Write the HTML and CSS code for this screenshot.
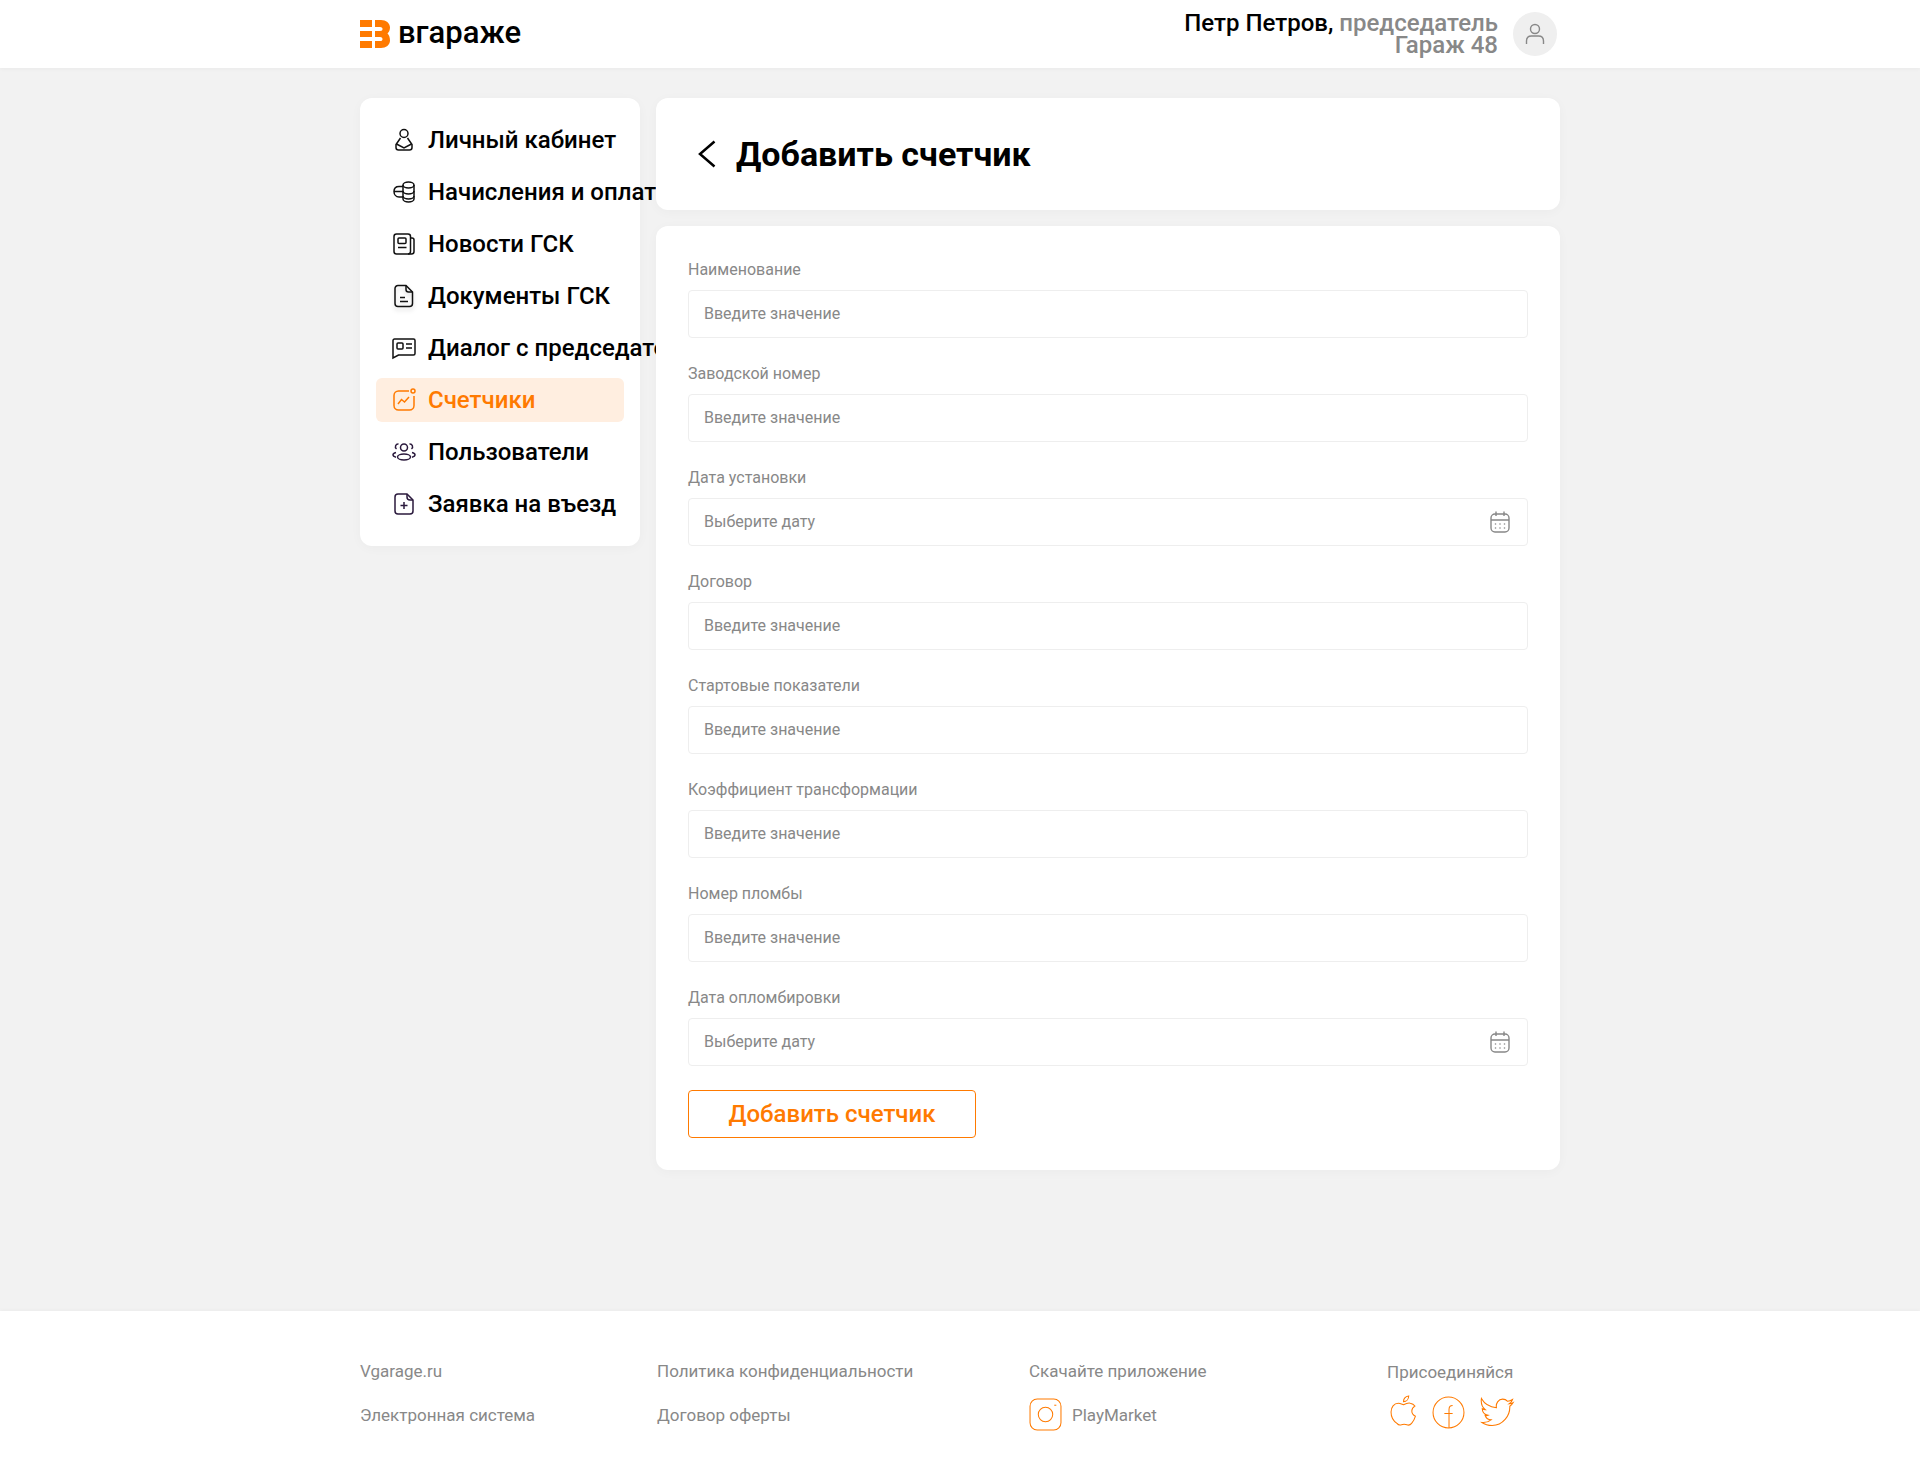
FILE: index.html
```html
<!DOCTYPE html>
<html lang="ru">

<head>
    <meta charset="UTF-8">
    <meta name="viewport" content="width=device-width, initial-scale=1.0">
    <title>Добавить счетчик</title>
    <link rel="stylesheet" href="styles.css">
</head>

<body>

    <header class="topbar">
        <div class="topbar-inner">
            <a class="logo" href="#">
                <svg class="logo-mark" viewBox="0 0 30 28" width="30" height="28">
                    <path fill="#ff7a00" d="M0 0h12v7H0zM0 11h12v6H0zM0 21h12v7H0zM15 0h6c5 0 9 3 9 7.500 0 2.500-1 4.500-2.500 6 1.500 1.500 2.500 3.500 2.500 7 0 4.500-4 7.500-9 7.500h-6v-7h5c2 0 2.500-1 2.500-1.800S22 17 20 17h-5v-6h5c2 0 2.500-1 2.500-2S22 7 20 7h-5z" />
                </svg>
                <span class="logo-text">вгараже</span>
            </a>
            <div class="user">
                <div class="user-text">
                    <div><b>Петр Петров,</b> председатель</div>
                    <div>Гараж 48</div>
                </div>
                <div class="avatar">
                    <svg viewBox="0 0 24 24" width="24" height="24" fill="none" stroke="#888" stroke-width="1.400">
                        <circle cx="12" cy="7" r="4.500" />
                        <path d="M3.500 22v-3c0-3 2-5 5-5h7c3 0 5 2 5 5v3" />
                    </svg>
                </div>
            </div>
        </div>
    </header>

    <div class="page">
        <aside class="sidebar">
            <a class="nav-item" href="#">
                <svg class="nav-icon" viewBox="0 0 24 24">
                    <circle cx="12" cy="5.500" r="4" />
                    <path d="M8.500 10 4 16.500v3A2.500 2.500 0 0 0 6.500 22h11a2.500 2.500 0 0 0 2.500-2.500v-3L15.500 10" />
                    <path d="m4.500 16 7.500 4 7.500-4" />
                </svg>
                <span>Личный кабинет</span>
            </a>
            <a class="nav-item" href="#">
                <svg class="nav-icon" viewBox="0 0 24 24">
                    <path d="M11 5c0-1.700 2.500-3 5.500-3S22 3.300 22 5v14c0 1.700-2.500 3-5.500 3S11 20.700 11 19z" />
                    <path d="M11 5c0 1.700 2.500 3 5.500 3S22 6.700 22 5M11 11c0 1.700 2.500 3 5.500 3s5.500-1.300 5.500-3M11 16c0 1.700 2.500 3 5.500 3s5.500-1.300 5.500-3" />
                    <path d="M11 6.500H7c-3 0-5 2-5 5s2 5.500 5 5.500h4M2.500 11.500H11" />
                </svg>
                <span>Начисления и оплата</span>
            </a>
            <a class="nav-item" href="#">
                <svg class="nav-icon" viewBox="0 0 24 24">
                    <rect x="2" y="2" width="16.500" height="20" rx="2.500" />
                    <rect x="6" y="6" width="8" height="5.500" rx="1" />
                    <path d="M6 15.500h8.500M18.500 6h1.500a2 2 0 0 1 2 2v11.500a2.500 2.500 0 0 1-2.500 2.500H16" />
                </svg>
                <span>Новости ГСК</span>
            </a>
            <a class="nav-item" href="#">
                <svg class="nav-icon soft" viewBox="0 0 24 24">
                    <path d="M6 1.500h8l6.500 6.500v11.500a3 3 0 0 1-3 3h-11.500a3 3 0 0 1-3-3v-15a3 3 0 0 1 3-3z" />
                    <path d="M14 1.500v4a2.500 2.500 0 0 0 2.500 2.500h4M8 13.500h5M8 17.500h8" />
                </svg>
                <span>Документы ГСК</span>
            </a>
            <a class="nav-item" href="#">
                <svg class="nav-icon" viewBox="0 0 24 24">
                    <path d="M2.500 3h19A1.500 1.500 0 0 1 23 4.500v13a1.500 1.500 0 0 1-1.500 1.500H6.500L1 22V4.500A1.500 1.500 0 0 1 2.500 3z" />
                    <rect x="5" y="7" width="6" height="6" rx="1" />
                    <path d="M14 8h6M14 12h6" />
                </svg>
                <span>Диалог с председателем</span>
            </a>
            <a class="nav-item active" href="#">
                <svg class="nav-icon" viewBox="0 0 24 24">
                    <path d="M17 3H6.500A4.500 4.500 0 0 0 2 7.500v10A4.500 4.500 0 0 0 6.500 22h11a4.500 4.500 0 0 0 4.500-4.500V8" />
                    <circle cx="21" cy="3" r="2" />
                    <path d="m6 16 3.500-4.500 3 2.500L17 9" />
                </svg>
                <span>Счетчики</span>
            </a>
            <a class="nav-item" href="#">
                <svg class="nav-icon dark" viewBox="0 0 24 24">
                    <circle cx="12" cy="7.500" r="3.500" />
                    <path d="M6.500 4a2.800 2.800 0 0 0-2 5M17.500 4a2.800 2.800 0 0 1 2 5" />
                    <ellipse cx="12" cy="17" rx="6.500" ry="3" />
                    <path d="M4 12.500c-2 .5-3 1.300-3 2.300s1 1.900 3 2.400M20 12.500c2 .5 3 1.300 3 2.300s-1 1.900-3 2.400" />
                </svg>
                <span>Пользователи</span>
            </a>
            <a class="nav-item" href="#">
                <svg class="nav-icon dark" viewBox="0 0 24 24">
                    <path d="M6 2h9l6 6v11a3 3 0 0 1-3 3H6a3 3 0 0 1-3-3V5a3 3 0 0 1 3-3z" />
                    <path d="M15 2v3a3 3 0 0 0 3 3h3M12 10v7M8.500 13.500h7" />
                </svg>
                <span>Заявка на въезд</span>
            </a>
        </aside>

        <main class="content">
            <div class="card title-card">
                <a class="back" href="#">
                    <svg viewBox="0 0 18 28" width="18" height="28" fill="none" stroke="#000" stroke-width="2.500">
                        <path d="M16.500 1.500 2 14l14.500 12.500" />
                    </svg>
                </a>
                <h1>Добавить счетчик</h1>
            </div>

            <form class="card form-card">
                <div class="field">
                    <label>Наименование</label>
                    <input type="text" placeholder="Введите значение">
                </div>
                <div class="field">
                    <label>Заводской номер</label>
                    <input type="text" placeholder="Введите значение">
                </div>
                <div class="field">
                    <label>Дата установки</label>
                    <div class="date-input">
                        <input type="text" placeholder="Выберите дату">
                        <svg class="cal" viewBox="0 0 20 22">
                            <use href="#calendar" />
                        </svg>
                    </div>
                </div>
                <div class="field">
                    <label>Договор</label>
                    <input type="text" placeholder="Введите значение">
                </div>
                <div class="field">
                    <label>Стартовые показатели</label>
                    <input type="text" placeholder="Введите значение">
                </div>
                <div class="field">
                    <label>Коэффициент трансформации</label>
                    <input type="text" placeholder="Введите значение">
                </div>
                <div class="field">
                    <label>Номер пломбы</label>
                    <input type="text" placeholder="Введите значение">
                </div>
                <div class="field">
                    <label>Дата опломбировки</label>
                    <div class="date-input">
                        <input type="text" placeholder="Выберите дату">
                        <svg class="cal" viewBox="0 0 20 22">
                            <use href="#calendar" />
                        </svg>
                    </div>
                </div>
                <button class="add-btn" type="button">Добавить счетчик</button>
            </form>
        </main>
    </div>

    <footer class="footer">
        <div class="footer-inner">
            <div class="footer-col">
                <a href="#">Vgarage.ru</a>
                <a href="#">Электронная система</a>
            </div>
            <div class="footer-col">
                <a href="#">Политика конфиденциальности</a>
                <a href="#">Договор оферты</a>
            </div>
            <div class="footer-col">
                <a href="#">Скачайте приложение</a>
                <a class="store" href="#">
                    <svg class="orange-icon" viewBox="0 0 32 32" width="33" height="33">
                        <rect x="1" y="1" width="30" height="30" rx="7" />
                        <circle cx="16" cy="16" r="7" />
                        <path d="M24.500 7h2" />
                    </svg>
                    <span>PlayMarket</span>
                </a>
            </div>
            <div class="footer-col join">
                <a href="#">Присоединяйся</a>
                <div class="socials">
                    <svg class="orange-icon" viewBox="0 0 26 32" width="27" height="34">
                        <path d="M13 9c2-1 4-2 6.500-1.500 2 .3 3.500 1.300 4.500 2.800-2 1.200-3 2.700-3 4.700 0 2.300 1.300 4 3.500 5-.7 2.500-2 5-3.700 7-1.300 1.500-2.800 2-4.500 1.300-2-.8-3.500-.8-5.300 0-1.700.7-3.100.2-4.300-1.300C3.500 24.800 1 20.500 1 16c0-4.500 2.800-8.500 7-8.500 2 0 3.500 1 5 1.500z" />
                        <path d="M13 6c0-3 2-5 5-5.500 0 3-2 5.500-5 5.500z" />
                    </svg>
                    <svg class="orange-icon" viewBox="0 0 32 32" width="33" height="33">
                        <circle cx="16" cy="16" r="15" />
                        <path d="M16.500 31V13c0-2.500 1-3.800 3.500-3.800M12 17h8" />
                    </svg>
                    <svg class="orange-icon" viewBox="0 0 32 28" width="35" height="30">
                        <path d="M1 1.500c2.500 4.500 7.500 8 14 8.500-.8-4 1.800-8 5.800-8 2 0 3.500.8 4.700 2 1.500-.2 3-.8 4.500-1.700-.5 1.500-1.500 3-3 4 1.300-.1 2.500-.5 3.500-1-.8 1.300-2 2.500-3 3.300.3 9-6.500 18-16.500 18-3.500 0-7-1-9.500-2.800 3 .3 6-.5 8.500-2.500-2.500 0-4.700-1.700-5.500-4 1 .2 2 .1 2.700-.2C4 16.500 1.800 14 1.800 11c.8.500 1.800.8 2.800.8C1.500 9.500.5 5 1 1.500z" />
                    </svg>
                </div>
            </div>
        </div>
    </footer>

    <svg class="defs" width="0" height="0">
        <symbol id="calendar" viewBox="0 0 20 22">
            <rect x="1" y="3" width="18" height="18" rx="4" fill="none" stroke="#888" stroke-width="1.400" />
            <path d="M1 9h18M6 .5v4.500M14 .5v4.500" fill="none" stroke="#888" stroke-width="1.400" />
            <g fill="#888">
                <circle cx="5.500" cy="13" r=".8" />
                <circle cx="10" cy="13" r=".8" />
                <circle cx="14.500" cy="13" r=".8" />
                <circle cx="5.500" cy="17" r=".8" />
                <circle cx="10" cy="17" r=".8" />
                <circle cx="14.500" cy="17" r=".8" />
            </g>
        </symbol>
    </svg>

</body>

</html>
```

FILE: styles.css
```css
* {
    box-sizing: border-box;
}

body {
    margin: 0;
    font-family: 'Roboto', sans-serif;
    color: #000;
    background-color: #f2f2f2;
}

a {
    color: inherit;
    text-decoration: none;
}

.defs {
    position: absolute;
}

/* Header */
.topbar {
    height: 68px;
    background-color: #fff;
    box-shadow: 0 1px 4px rgba(0, 0, 0, 0.04);
}

.topbar-inner {
    width: 1200px;
    height: 68px;
    margin: 0 auto;
    display: flex;
    align-items: center;
    justify-content: space-between;
}

.logo {
    display: flex;
    align-items: center;
    gap: 8px;
    font-size: 31px;
    font-weight: 500;
}

.logo-mark {
    display: block;
}

.logo-text {
    padding-bottom: 3px;
}

.user {
    display: flex;
    align-items: center;
    gap: 15px;
    padding-right: 3px;
}

.user-text {
    font-size: 24px;
    font-weight: 500;
    line-height: 22px;
    text-align: right;
    color: #888;
}

.user-text b {
    font-weight: 500;
    color: #000;
}

.avatar {
    width: 44px;
    height: 44px;
    border-radius: 50%;
    background-color: #efefef;
    display: flex;
    align-items: center;
    justify-content: center;
}

/* Page layout */
.page {
    width: 1200px;
    margin: 30px auto 141px;
    display: flex;
    align-items: flex-start;
    gap: 16px;
}

.sidebar {
    flex: 0 0 280px;
    width: 280px;
    padding: 20px 16px;
    display: flex;
    flex-direction: column;
    gap: 8px;
    background-color: #fff;
    border-radius: 12px;
    box-shadow: 0 2px 12px rgba(0, 0, 0, 0.03);
}

.nav-item {
    height: 44px;
    padding: 0 16px;
    display: flex;
    align-items: center;
    gap: 12px;
    font-size: 24px;
    font-weight: 500;
    white-space: nowrap;
    border-radius: 6px;
}

.nav-icon {
    flex: none;
    width: 24px;
    height: 24px;
    fill: none;
    stroke: #111;
    stroke-width: 1.500;
}

.nav-icon.dark {
    stroke: #2b1a3d;
}

.nav-icon.soft {
    filter: drop-shadow(0 3px 2px rgba(0, 0, 0, 0.15));
}

.nav-item.active {
    color: #ff7a00;
    background-color: #ffeee0;
}

.nav-item.active .nav-icon {
    stroke: #ff7a00;
}

/* Content */
.content {
    position: relative;
    flex: 1;
    display: flex;
    flex-direction: column;
    gap: 16px;
}

.card {
    background-color: #fff;
    border-radius: 12px;
    box-shadow: 0 2px 12px rgba(0, 0, 0, 0.03);
}

.title-card {
    height: 112px;
    padding: 0 42px;
    display: flex;
    align-items: center;
    gap: 20px;
}

.back {
    display: flex;
}

h1 {
    margin: 0;
    font-size: 34px;
    font-weight: 700;
}

.form-card {
    padding: 32px;
    display: flex;
    flex-direction: column;
    gap: 24px;
}

.field label {
    display: block;
    height: 24px;
    margin-bottom: 8px;
    font-size: 16px;
    line-height: 24px;
    color: #888;
}

.field input {
    display: block;
    width: 100%;
    height: 48px;
    padding: 0 15px 2px;
    font-family: inherit;
    font-size: 16px;
    color: #000;
    background-color: #fff;
    border: 1px solid #eee;
    border-radius: 4px;
    outline: none;
}

.field input::placeholder {
    color: #888;
    opacity: 1;
}

.date-input {
    position: relative;
}

.cal {
    position: absolute;
    top: 13px;
    right: 18px;
    width: 20px;
    height: 22px;
}

.add-btn {
    width: 288px;
    height: 48px;
    font-family: inherit;
    font-size: 24px;
    font-weight: 500;
    color: #ff7a00;
    background-color: #fff;
    border: 1.500px solid #ff7a00;
    border-radius: 4px;
}

/* Footer */
.footer {
    height: 157px;
    background-color: #fff;
    box-shadow: 0 -1px 4px rgba(0, 0, 0, 0.03);
}

.footer-inner {
    width: 1200px;
    margin: 0 auto;
    padding-top: 50px;
    display: grid;
    grid-template-columns: 297px 372px 358px auto;
    font-size: 17px;
    color: #888;
}

.footer-col {
    display: flex;
    flex-direction: column;
    gap: 24px;
    line-height: 20px;
    white-space: nowrap;
}

.store {
    display: flex;
    align-items: center;
    gap: 10px;
    margin-top: -7px;
}

.orange-icon {
    display: block;
    fill: none;
    stroke: #ff7a00;
    stroke-width: 1;
}

.join {
    gap: 13px;
    padding-top: 1px;
}

.socials {
    display: flex;
    align-items: center;
    gap: 15px;
    padding-left: 3px;
}
```
